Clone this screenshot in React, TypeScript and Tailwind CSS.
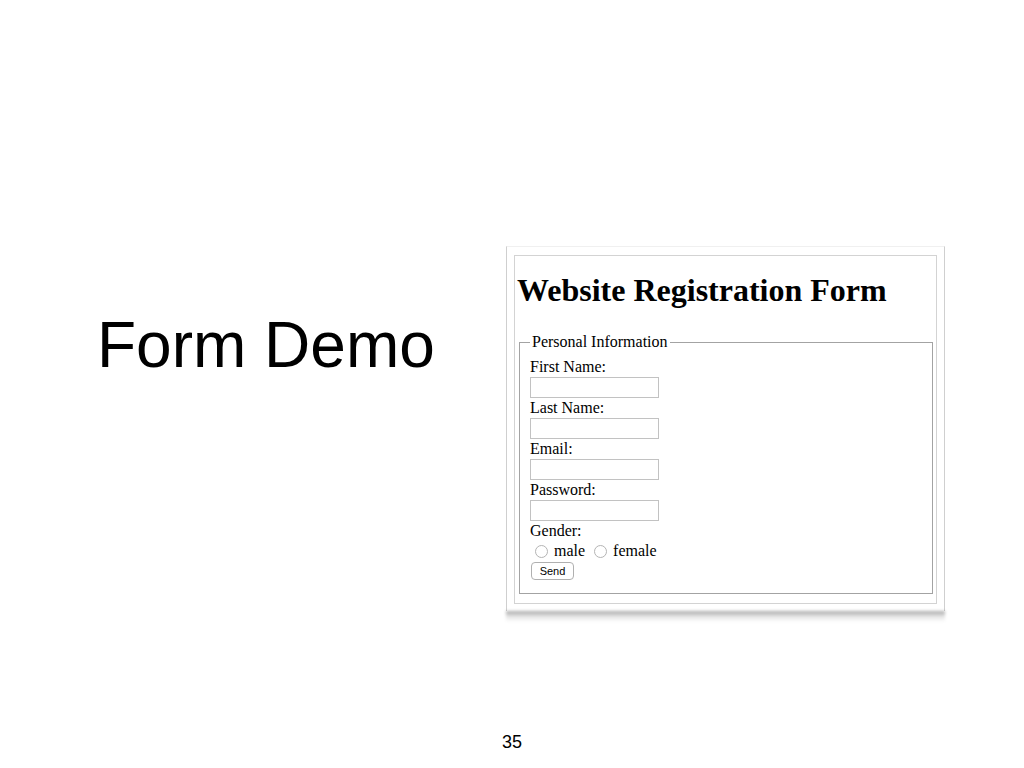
import React from 'react';

const serif = 'font-["Liberation_Serif","Times_New_Roman",serif]';

function TextField({ label, id, type = 'text' }: { label: string; id: string; type?: string }) {
  return (
    <div className="flex flex-col items-start">
      <label htmlFor={id} className="text-[16px] leading-[20px] text-black">
        {label}
      </label>
      <input
        id={id}
        type={type}
        className="w-[129px] h-[21px] bg-white border border-[#c2c2c2] outline-none"
      />
    </div>
  );
}

function Radio({ id, label }: { id: string; label: string }) {
  return (
    <span className="inline-flex items-center">
      <input
        id={id}
        type="radio"
        name="gender"
        className="appearance-none w-[13px] h-[13px] rounded-full border border-[#b4b4b4] bg-white ml-[5px] mr-[6px] mt-[1px]"
      />
      <label htmlFor={id} className="text-[16px] leading-[20px] text-black">
        {label}
      </label>
    </span>
  );
}

export default function App() {
  return (
    <div className="w-[1024px] h-[768px] bg-white flex flex-col overflow-hidden">
      <div className="flex items-start pt-[246px]">
        {/* Slide title */}
        <h2 className='ml-[97px] mt-[67px] w-[409px] shrink-0 font-["Liberation_Sans",Arial,sans-serif] text-[64px] leading-none text-black'>
          Form Demo
        </h2>

        {/* Screenshot frame */}
        <div className="relative shrink-0 w-[439px] pl-[7px] pr-[7px] pt-[8px] pb-[7px] bg-white border-x border-[#cfcfcf] border-t border-t-[#f0f0f0]">
          <div className="absolute left-[-1px] right-[-1px] top-full h-[11px] bg-linear-to-b from-black/35 via-black/10 to-transparent blur-[1.5px]" />
          <div className={`relative bg-white border border-[#d3d3d3] pt-[16px] pl-[2px] pr-[3px] pb-[9px] ${serif}`}>
            <h1 className="text-[32px] leading-[37px] font-bold text-black">Website Registration Form</h1>

            <fieldset className="mt-[24px] ml-[2px] border border-[#a3a3a3] pl-[10px] pt-[6px] pb-[13px]">
              <legend className="px-[2px] text-[16px] leading-[18px] text-black">Personal Information</legend>
              <div className="flex flex-col items-start">
                <TextField label="First Name:" id="fname" />
                <TextField label="Last Name:" id="lname" />
                <TextField label="Email:" id="email" type="email" />
                <TextField label="Password:" id="password" type="password" />
                <span className="text-[16px] leading-[20px] text-black">Gender:</span>
                <div className="flex items-center gap-[4px] h-[19px]">
                  <Radio id="male" label="male" />
                  <Radio id="female" label="female" />
                </div>
                <button
                  type="button"
                  className='mt-[2px] ml-[1px] w-[43px] h-[18px] rounded-[4px] border border-[#b0b0b0] bg-white font-["Liberation_Sans",Arial,sans-serif] text-[11px] leading-none text-black'
                >
                  Send
                </button>
              </div>
            </fieldset>
          </div>
        </div>
      </div>

      {/* Slide number */}
      <div className='mt-auto mb-[17px] text-center font-["Liberation_Sans",Arial,sans-serif] text-[18px] leading-none text-black'>
        35
      </div>
    </div>
  );
}
